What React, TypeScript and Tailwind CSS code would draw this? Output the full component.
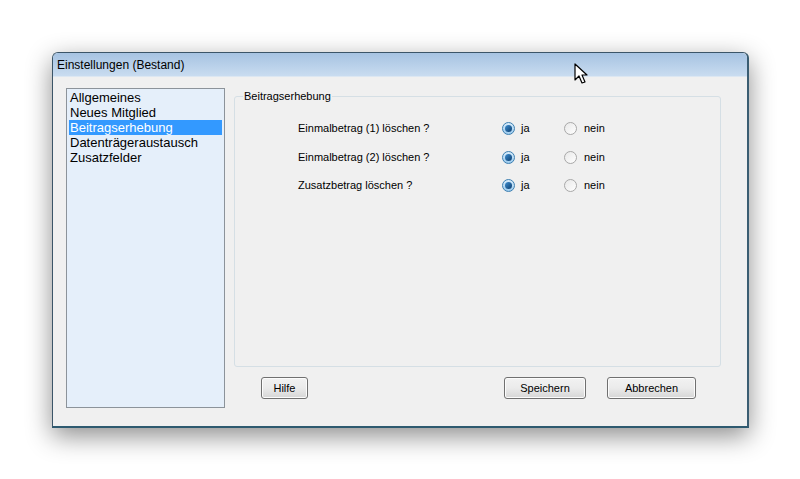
import React, { useState } from 'react';

const sections = ['Allgemeines', 'Neues Mitglied', 'Beitragserhebung', 'Datenträgeraustausch', 'Zusatzfelder'];

const questions = ['Einmalbetrag (1) löschen ?', 'Einmalbetrag (2) löschen ?', 'Zusatzbetrag löschen ?'];

function Radio({ checked }: { checked: boolean }) {
  return checked ? (
    <span className="w-[13px] h-[13px] rounded-full border border-[#3c7fb1] bg-gradient-to-b from-[#d8ecfb] to-[#9ccbee] flex items-center justify-center">
      <span className="w-[7px] h-[7px] rounded-full bg-gradient-to-br from-[#3e8ed0] to-[#0d3f70]" />
    </span>
  ) : (
    <span className="w-[13px] h-[13px] rounded-full border border-[#a8a8a8] bg-gradient-to-br from-[#e8e8e8] to-[#ffffff]" />
  );
}

function Button({ label, width }: { label: string; width: string }) {
  return (
    <button
      className={`${width} h-[22px] rounded-[3px] border border-[#707070] bg-gradient-to-b from-[#f2f2f2] via-[#ebebeb] to-[#d6d6d6] text-[11px] text-black shadow-[inset_0_0_0_1px_#fcfcfc]`}
    >
      {label}
    </button>
  );
}

export default function App() {
  const [selected, setSelected] = useState(2);
  const [answers, setAnswers] = useState([true, true, true]);

  return (
    <div className="w-[800px] h-[479px] bg-white relative overflow-hidden pt-[52px] pl-[52px] font-['Liberation_Sans',Arial,sans-serif]">
      <div className="w-[697px] h-[376px] flex flex-col border border-[#3b5568] border-b-2 border-b-[#2e5a70] border-r-2 border-r-[#3a5d72] rounded-t-[6px] bg-[#f0f0f0] shadow-[0_8px_26px_rgba(0,0,0,0.45)]">
        {/* Title bar */}
        <div className="h-[24px] shrink-0 rounded-t-[5px] bg-gradient-to-b from-[#a6c3e2] to-[#c9dcf0] flex items-center pl-[4px] pt-[1px] text-[12px] text-black border-b border-[#dce7f2]">
          Einstellungen (Bestand)
        </div>

        <div className="flex pl-[13px] pt-[11px]">
          {/* Section list */}
          <div className="w-[159px] h-[320px] border border-[#8c939a] bg-[#e5effa] pt-[1px] px-[2px]">
            {sections.map((s, i) => (
              <div
                key={s}
                onClick={() => setSelected(i)}
                className={`h-[15px] leading-[15px] text-[13px] pl-[1px] ${i === selected ? 'bg-[#3399ff] text-white' : 'text-black'}`}
              >
                {s}
              </div>
            ))}
          </div>

          <div className="ml-[9px] flex flex-col">
            {/* Group box */}
            <fieldset className="w-[487px] h-[279px] border border-[#d5dfe5] rounded-[3px] px-[8px] pt-[0px]">
              <legend className="text-[11px] text-black px-[1px] ml-[0px]">Beitragserhebung</legend>
              <div className="flex flex-col pt-[16px] pl-[55px] gap-[14px]">
                {questions.map((q, i) => (
                  <div key={q} className={`flex items-center h-[15px] text-[11px] text-black ${i === 2 ? '-mt-[1px]' : ''}`}>
                    <span className="w-[204px]">{q}</span>
                    <label
                      className="flex items-center gap-[6px] w-[62px]"
                      onClick={() => setAnswers(answers.map((a, j) => (j === i ? true : a)))}
                    >
                      <Radio checked={answers[i]} />
                      <span>ja</span>
                    </label>
                    <label
                      className="flex items-center gap-[7px]"
                      onClick={() => setAnswers(answers.map((a, j) => (j === i ? false : a)))}
                    >
                      <Radio checked={!answers[i]} />
                      <span>nein</span>
                    </label>
                  </div>
                ))}
              </div>
            </fieldset>

            {/* Buttons */}
            <div className="flex items-center mt-[10px] pl-[27px]">
              <Button label="Hilfe" width="w-[47px]" />
              <div className="ml-[196px] flex gap-[21px]">
                <Button label="Speichern" width="w-[82px]" />
                <Button label="Abbrechen" width="w-[89px]" />
              </div>
            </div>
          </div>
        </div>
      </div>

      {/* Mouse cursor */}
      <svg className="absolute left-[574px] top-[63px]" width="14" height="22" viewBox="0 0 14 22">
        <path d="M1 1 L1 17 L5 13 L8 20 L11 19 L8 12 L13 12 Z" fill="#ffffff" stroke="#000000" strokeWidth="1.2" strokeLinejoin="round" />
      </svg>
    </div>
  );
}
